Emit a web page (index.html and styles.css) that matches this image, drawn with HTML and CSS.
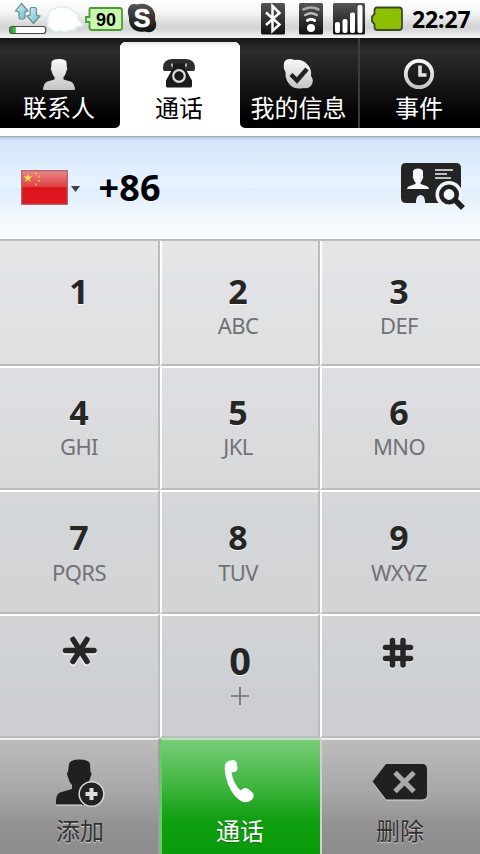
FILE: index.html
```
<!DOCTYPE html>
<html lang="zh-CN">
<head>
<meta charset="utf-8">
<title>通话</title>
<link rel="stylesheet" href="styles.css">
</head>
<body>
<div class="phone">
  <header class="status">
    <svg class="status-icons" width="160" height="38" viewBox="0 0 160 38">
      <defs>
        <linearGradient id="dark" x1="0" y1="0" x2="0" y2="1"><stop offset="0" stop-color="#555"/><stop offset="1" stop-color="#111"/></linearGradient>
        <linearGradient id="aqua" x1="0" y1="0" x2="1" y2="1"><stop offset="0" stop-color="#d5f5f7"/><stop offset="1" stop-color="#61bdca"/></linearGradient>
        <linearGradient id="load" x1="0" y1="0" x2="1" y2="0"><stop offset="0" stop-color="#168a22"/><stop offset="1" stop-color="#58d35d"/></linearGradient>
      </defs>
      <path d="M21.500 3.500l6.500 7.500-3 1v5.500q0 1.500-1.500 1.500h-3q-1.500 0-1.500-1.500V12l-3.500-1z" fill="url(#aqua)" stroke="#71898f" stroke-width="1.200"/>
      <path d="M33.500 23.500L27 16l3.200-1V9q0-1.500 1.500-1.500h3Q36.500 7.500 36.500 9v6l3.500 1z" fill="url(#aqua)" stroke="#71898f" stroke-width="1.200"/>
      <rect x="9.700" y="26.500" width="36" height="7" rx="2.500" fill="#fff" stroke="#484848" stroke-width="1.200"/>
      <path d="M12 27h4v6h-4q-2 0-2-3t2-3z" fill="url(#load)"/>
      <path d="M49 14q0-5 6-5 3-4 8-1.500 7-1.500 10 4 6 2 5 7 2 4 5 6-2 3-6 2-2 5-7 3.500-5 3.500-9 .5-6 3-10-1.500-5-3-3-8-1-4 1-7z" fill="#fff" stroke="#dcecf0" stroke-width="1.500"/>
      <path d="M90.500 8h29q2.500 0 2.500 2.500v17.500q0 2-2.500 2H92q-2.500 0-2.500-2.500V22H86v-5h3.500V9q0-1 1-1z" fill="#cbf8af" stroke="#4c9c36" stroke-width="1.800"/>
      <text x="106" y="25.800" class="gauge">90</text>
      <path d="M129 7q2-4 8-2.500c10-3 20 4 18 15 4 8-2 15-10 12-10 2-17-5-16-14-1-4-2-7 0-10.500z" fill="url(#dark)"/>
      <text x="142" y="26.800" class="skype">S</text>
    </svg>
    <svg class="system-icons" width="150" height="38" viewBox="256 0 150 38">
      <g fill="url(#dark)">
        <rect x="261" y="3" width="24" height="31.500" rx="1.500"/>
        <rect x="299" y="3" width="24" height="31.500" rx="1.500"/>
        <rect x="333" y="3" width="32" height="31.500" rx="1.500"/>
      </g>
      <path d="M266 12.500l13.500 12-7 6.500V6l7 7L266 25" fill="none" stroke="#fff" stroke-width="2.500"/>
      <g fill="none" stroke-linecap="round">
        <path d="M303.500 9.500q7.500-4 15 0" stroke="#aaa" stroke-width="2.600"/>
        <path d="M305.300 15q5.700-3.600 11.400 0" stroke="#bbb" stroke-width="2.600"/>
        <path d="M307.300 20.500q3.700-2.500 7.400 0" stroke="#fff" stroke-width="2.800"/>
      </g>
      <circle cx="311" cy="28" r="4" fill="#fff"/>
      <g fill="#fff">
        <rect x="335" y="22" width="5" height="11" rx="2"/>
        <rect x="342.500" y="19" width="5" height="14" rx="2"/>
        <rect x="350" y="12.500" width="5" height="20.500" rx="2"/>
        <rect x="357.500" y="5" width="5" height="28" rx="2"/>
      </g>
      <path d="M377 7.500h22q3 0 3 3v16.500q0 3-3 3h-22q-2 0-2.500-2.500V24l-2.500-2.500v-5l2.500-2.500v-4q.5-2.500 2.500-2.500z" fill="#8dc000" stroke="#3a4a2a" stroke-width="1.800"/>
    </svg>
    <span class="clock">22:27</span>
  </header>

  <nav class="tabs">
    <a class="tab tab-contacts">
      <svg width="34" height="34" viewBox="0 0 34 34">
        <defs><linearGradient id="silver" x1="0" y1="0" x2="0" y2="1"><stop offset="0" stop-color="#fafafa"/><stop offset="1" stop-color="#c4c4c4"/></linearGradient></defs>
        <path d="M9.500 4q1-3 7.500-3t7.500 3l.3 5q1.200 1-.3 4-1 4-3 6v2.500l7 2q4 1 4.500 8.500H1q.5-7.500 4.500-8.500l7-2V19q-2-2-3-6-1.500-3-.3-4z" fill="url(#silver)"/>
      </svg>
      <span>联系人</span>
    </a>
    <a class="tab active">
      <svg width="34" height="34" viewBox="0 0 34 34">
        <path d="M1 9.500Q1 1.500 10 1h14q9 .5 9 8.500 0 3.500-1.500 3.500H25q-1.500 0-1.500-3l-.5-2.500H11L10.500 10q0 3-1.500 3H2.500Q1 13 1 9.500z" fill="#2d2d2d"/>
        <path d="M11 5.500h12v3l2 5 5 9v5.500q0 1.500-1.500 1.500h-23Q4 29.500 4 28v-5.500l5-9 2-5z" fill="#1b1b1b"/>
        <path d="M10 5.500v3M24 5.500v3" stroke="#fff" stroke-width="1.200"/>
        <circle cx="17" cy="18" r="5.800" fill="none" stroke="#ddd" stroke-width="2.200"/>
      </svg>
      <span>通话</span>
    </a>
    <a class="tab tab-profile">
      <svg width="34" height="34" viewBox="0 0 34 34">
        <path d="M2 5q1-4 6-4 3 0 4 1 8-1 13 4 5 5 4 12 3 4 1 8-2 5-8 4-9 2-14-3Q3 22 3.500 14 1 10 2 5z" fill="url(#silver)"/>
        <path d="M9 16.500l6 6L25 11" fill="none" stroke="#222" stroke-width="4.500"/>
      </svg>
      <span>我的信息</span>
    </a>
    <a class="tab tab-events">
      <svg width="34" height="34" viewBox="0 0 34 34">
        <circle cx="17" cy="16" r="13.200" fill="none" stroke="url(#silver)" stroke-width="3.800"/>
        <path d="M18 7.500v9.500h6.500" fill="none" stroke="#e2e2e2" stroke-width="3.600"/>
      </svg>
      <span>事件</span>
    </a>
  </nav>

  <section class="number-bar">
    <svg class="flag" width="47" height="35" viewBox="0 0 47 35">
      <defs><linearGradient id="red" x1="0" y1="0" x2="0" y2="1"><stop offset="0" stop-color="#e98888"/><stop offset=".48" stop-color="#e04040"/><stop offset=".5" stop-color="#dc161c"/><stop offset="1" stop-color="#df1820"/></linearGradient></defs>
      <rect x=".7" y=".7" width="45.600" height="33.600" fill="url(#red)" stroke="#b35a62" stroke-width="1.200"/>
      <path d="M6.800 3.500l1 3h3.400l-2.700 2 1 3.200-2.700-2-2.700 2 1-3.200-2.700-2h3.400z" fill="#ffe34d"/>
      <g fill="#f5c83c"><circle cx="15" cy="3.500" r="1"/><circle cx="18" cy="6.500" r="1"/><circle cx="18" cy="11" r="1"/><circle cx="15" cy="14.500" r="1"/></g>
    </svg>
    <svg class="caret" width="9" height="6" viewBox="0 0 9 6"><path d="M0 0h9L4.500 6z" fill="#3b434b"/></svg>
    <span class="number">+86</span>
    <svg class="lookup" width="66" height="50" viewBox="0 0 66 50">
      <path fill-rule="evenodd" d="M5 1h50q5 0 5 5v30q0 5-5 5H24v-2q-.5-6-4.500-6T15 39v2H5q-5 0-5-5V6q0-5 5-5z" fill="#242424"/>
      <path d="M12 9q1-2.500 5-2.500T22 9v5q1 1-.5 3-1 3-2 3.500V22l6 2q2.500 1 2.500 3H6q0-2 2.500-3l6-2v-1.500q-1-.5-2-3.500-1.500-2-.5-3z" fill="#f5f9fd"/>
      <path d="M34 8h18M34 12h12M34 16h16" stroke="#f0f4f8" stroke-width="1.600"/>
      <circle cx="48" cy="32.500" r="13.500" fill="#edf5fe"/>
      <path d="M54 38l8 8" stroke="#202020" stroke-width="5.500"/>
      <circle cx="48" cy="32.500" r="7.700" fill="#f3f9ff" stroke="#202020" stroke-width="4.600"/>
    </svg>
  </section>

  <main class="keypad">
    <button class="key"><b>1</b></button>
    <button class="key"><b>2</b><small>ABC</small></button>
    <button class="key"><b>3</b><small>DEF</small></button>
    <button class="key row2"><b>4</b><small>GHI</small></button>
    <button class="key row2"><b>5</b><small>JKL</small></button>
    <button class="key row2"><b>6</b><small>MNO</small></button>
    <button class="key row3"><b>7</b><small>PQRS</small></button>
    <button class="key row3"><b>8</b><small>TUV</small></button>
    <button class="key row3"><b>9</b><small>WXYZ</small></button>
    <button class="key symbol" aria-label="*">
      <svg width="36" height="32" viewBox="0 0 36 32"><g fill="none" stroke-width="5.500" stroke-linecap="round"><path d="M3.500 16h28.500M11 5l13.500 22M25 5L11 27" stroke="#f8f8f8"/><path d="M3.500 14.500h28.500M11 3.500l14 22M25 3.500l-14 22" stroke="#262626"/></g></svg>
    </button>
    <button class="key zero"><b>0</b>
      <svg width="18" height="20" viewBox="0 0 18 20"><path d="M0 10h18M9 1v18" stroke="#707276" stroke-width="1.700"/></svg>
    </button>
    <button class="key symbol hash" aria-label="#">
      <svg width="36" height="34" viewBox="0 0 36 34"><g fill="none" stroke-width="5.500" stroke-linecap="round"><path d="M6.500 12.500h25M6.500 23.500h25M13.500 5v25M24 5v25" stroke="#f8f8f8"/><path d="M6.500 11.500h25M6.500 22.500h25M13.500 4.500v24.500M24 4.500v24.500" stroke="#262626"/></g></svg>
    </button>
  </main>

  <footer class="actions">
    <button class="action">
      <svg width="50" height="50" viewBox="0 0 50 50">
        <path d="M14 5q1-4.500 10.500-4.500T35 5l.5 8q2 1 0 5-1 5-4 8v3l10 4v13H1q-.5-11 4-12.500L17 30v-4q-3-3-4-8-2-4 0-5z" fill="#202020"/>
        <path d="M1 46h26" stroke="#e5e5e5"/>
        <circle cx="36.500" cy="35" r="12.300" fill="#222" stroke="#d8d8d8" stroke-width="1.500"/>
        <path d="M30.500 35h12M36.500 29v12" stroke="#ddd" stroke-width="4"/>
      </svg>
      <span>添加</span>
    </button>
    <button class="action call">
      <svg width="50" height="50" viewBox="0 0 50 50">
        <path d="M15 1.500Q20-.5 21.800 4l.7 5.500q0 4-6 3.700Q18 24 25.500 31.500q3.500-3.500 7-2l4.500 3.500q3.500 3.500 0 7.500-4 4-10 2-9-4.500-14-17.500Q9 14 10 6q1-3.500 5-4.500z" fill="#fff"/>
      </svg>
      <span>通话</span>
    </button>
    <button class="action">
      <svg class="delete-icon" width="58" height="50" viewBox="0 0 58 50">
        <path d="M15 6.500h36q5 0 5 5v25q0 5-5 5H15L1.500 23.500z" fill="#ddd"/>
        <path d="M15 5h36q5 0 5 5v25.500q0 5-5 5H15L1.500 22.500z" fill="#202020"/>
        <path d="M24 13.500l19 19m0-19l-19 19" stroke="#aaa" stroke-width="5"/>
      </svg>
      <span>删除</span>
    </button>
  </footer>
</div>
</body>
</html>
```

FILE: styles.css
```
* { box-sizing: border-box; }

body {
  margin: 0;
  font-family: "Noto Sans", "Noto Sans CJK SC", sans-serif;
}

button {
  margin: 0;
  border: 0;
  background: none;
  font-family: inherit;
}

svg { display: block; flex: none; }

.phone {
  display: flex;
  flex-direction: column;
  width: 480px;
  height: 854px;
  overflow: hidden;
  background: #fff;
}

.status {
  display: flex;
  justify-content: space-between;
  height: 38px;
  background: linear-gradient(#fff 0, #f4f4f4 35%, #d8d8d8 65%, #d4d4d4 75%, #f4f4f4 100%);
}

.system-icons { margin-left: auto; }

.gauge {
  font: bold 18px "Liberation Sans", sans-serif;
  text-anchor: middle;
}

.skype {
  fill: #fff;
  stroke: #fff;
  stroke-width: 0.6px;
  font: bold 25px "Liberation Sans", sans-serif;
  text-anchor: middle;
}

.clock {
  width: 74px;
  padding-left: 6px;
  font-size: 23px;
  font-weight: 700;
  line-height: 39px;
  letter-spacing: -0.1px;
  white-space: nowrap;
}

.tabs {
  display: grid;
  grid-template: 90px / 120px 120px 118px 122px;
  height: 98px;
  background: #fff;
}

.tab {
  display: flex;
  flex-direction: column;
  align-items: center;
  padding: 20px 2px 0 0;
  background: linear-gradient(#151715, #2c2c2c 15%, #000 90%);
  color: #fff;
  font-size: 24px;
  line-height: 30px;
}

.tab svg { margin-bottom: 1px; }

.tab-contacts { border-bottom-right-radius: 5px; }

.tab-profile {
  padding-right: 1px;
  padding-left: 0;
  border-bottom-left-radius: 5px;
}

.tab-profile span { white-space: nowrap; }

.tab-events {
  border-left: 2px solid #3c3c3c;
  padding-right: 2px;
}

.active {
  padding-top: 20px;
  background:
    radial-gradient(circle at 6px 10px, transparent 6px, #1c1e1c 6.500px) 0 0 / 6px 10px no-repeat,
    radial-gradient(circle at 0 10px, transparent 6px, #1c1e1c 6.500px) 100% 0 / 6px 10px no-repeat,
    linear-gradient(#1c1e1c 4px, #e8e8e8 4px, #fff 9px);
  color: #000;
}

.number-bar {
  display: flex;
  align-items: center;
  height: 105px;
  padding: 0 13px 0 20px;
  border-bottom: 2px solid #bcbcbc;
  background: linear-gradient(#93a5b8 0, #c2d5ec 2px, #d5e7fb 5px, #e7f3ff 49%, #dfedfb 51%, #f0f7fe 75%, #fafdff 100%);
}

.flag { margin-left: 0.5px; }

.caret { margin: 3px 19px 0 3px; }

.number {
  color: #000;
  font-size: 36px;
  font-weight: 700;
  line-height: 40px;
  letter-spacing: 0.2px;
}

.lookup { margin-left: auto; margin-bottom: 1px; }

.keypad {
  display: grid;
  grid-template: 125px 124px 124px 124px / 160px 160px 160px;
  background: linear-gradient(#e5e7e8 0, #e2e2e6 10%, #dfe1e2 20%, #dddde2 32%, #d9dadb 45%, #d3d6d9 55%, #d3d4d6 75%, #cdd1d6 87%, #cecdd2 94%, #cdccd1 100%);
}

.key {
  display: flex;
  flex-direction: column;
  align-items: center;
  padding: 33px 4px 0 0;
  border-right: 2px solid #bcbcbc;
  border-bottom: 2px solid #bcbcbc;
  border-left: 2px solid #fff;
}

.key:nth-child(3n + 1) { padding-right: 0; border-left: 0; }
.key:nth-child(3n) { border-right: 0; }
.key:nth-child(n + 4) { border-top: 2px solid #fff; }

.key b {
  color: #252525;
  font-size: 34px;
  line-height: 34px;
  text-shadow: 0 1px #f8f8f8;
}

.key small {
  margin-top: 6px;
  color: #707276;
  font-size: 22px;
  line-height: 22px;
  letter-spacing: -0.6px;
}

.row2 { padding-top: 27px; }
.row2 small { margin-top: 6px; }
.row3 { padding-top: 28px; }
.row3 small { margin-top: 7px; }

.symbol { padding-top: 20px; }
.key.symbol:nth-child(3n + 1) { padding-left: 2px; }
.key.hash { padding-right: 8px; }

.key.zero { padding: 25px 0 0; }
.zero b { font-size: 38px; line-height: 38px; }
.zero svg { margin-top: 7px; }

.actions {
  display: grid;
  grid-template-columns: repeat(3, 160px);
  height: 116px;
}

.action {
  display: flex;
  flex-direction: column;
  align-items: center;
  padding: 19px 0 0 2px;
  border-top: 2px solid #eee;
  border-right: 2px solid #a0a0a0;
  background: linear-gradient(#bcbcbc, #a8a8a8 45%, #929292 75%, #8c8c8c);
  color: #303030;
  font-size: 24px;
  line-height: 32px;
  text-shadow: 0 1px 1px #d8d8d8;
}

.action:last-child {
  padding: 19px 2px 0 0;
  border-right: 0;
  border-left: 2px solid #d0d0d0;
}

.call {
  padding: 19px 2px 0 0;
  border-top-color: #b8e5b8;
  border-right: 0;
  border-left: 2px solid #62cf60;
  background: linear-gradient(#78cc78, #48b948 35%, #109f10 70%, #099a09);
  color: #fff;
  text-shadow: 0 1px 1px #176c17;
}

.action svg { margin-bottom: 6px; }
```
